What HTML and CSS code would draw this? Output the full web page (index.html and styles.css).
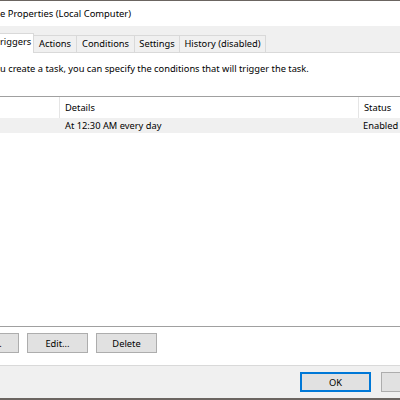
FILE: index.html
```html
<!DOCTYPE html>
<html>
<head>
<meta charset="utf-8">
<link rel="stylesheet" href="styles.css">
</head>
<body>
<div class="dialog">
  <div class="titlebar">e Properties (Local Computer)</div>
  <div class="body">
    <div class="tabs">
      <div class="tab selected">riggers</div>
      <div class="tab t-actions">Actions</div>
      <div class="tab t-conditions">Conditions</div>
      <div class="tab t-settings">Settings</div>
      <div class="tab t-history">History (disabled)</div>
    </div>
    <div class="panel">
      <p class="intro">u create a task, you can specify the conditions that will trigger the task.</p>
      <div class="list">
        <div class="row header">
          <div class="c1"></div>
          <div class="c2">Details</div>
          <div class="c3">Status</div>
        </div>
        <div class="row item">
          <div class="c1"></div>
          <div class="c2">At 12:30 AM every day</div>
          <div class="c3">Enabled</div>
        </div>
      </div>
      <div class="actions">
        <button class="btn new">New...</button>
        <button class="btn">Edit...</button>
        <button class="btn">Delete</button>
      </div>
    </div>
    <div class="footer">
      <button class="btn ok">OK</button>
      <button class="btn cancel">Cancel</button>
    </div>
  </div>
</div>
</body>
</html>
```

FILE: styles.css
```css
html, body {
  margin: 0;
  padding: 0;
  width: 400px;
  height: 400px;
  overflow: hidden;
  background: #f0f0f0;
}
.dialog {
  font-family: "Noto Sans", "Open Sans", sans-serif;
  font-size: 9.3px;
  color: #000;
  border-top: 1px solid #6b6561;
  border-bottom: 2px solid #6b6561;
  height: 397px;
  display: flex;
  flex-direction: column;
  width: 480px;
}
.titlebar {
  height: 25px;
  background: #fff;
  line-height: 26px;
  font-size: 9.4px;
  white-space: nowrap;
}
.body {
  flex: 1;
  display: flex;
  flex-direction: column;
  background: #f0f0f0;
}
.tabs {
  height: 26px;
  display: flex;
  align-items: flex-end;
}
.tab {
  height: 16px;
  line-height: 15px;
  border: 1px solid #d9d9d9;
  border-bottom: none;
  border-left: none;
  background: #f0f0f0;
  white-space: nowrap;
  text-align: center;
}
.t-actions { width: 42px; }
.t-conditions { width: 57px; }
.t-settings { width: 44px; }
.t-history { width: 85px; }
.tab.selected {
  width: 33px;
  height: 19px;
  text-align: left;
  background: #fff;
  line-height: 16px;
  margin-bottom: -1px;
  position: relative;
}
.panel {
  background: #fff;
  border-top: 1px solid #d9d9d9;
  border-bottom: 1px solid #d9d9d9;
  height: 312px;
  display: flex;
  flex-direction: column;
}
.intro {
  margin: 8px 0 0 0;
  height: 16px;
  line-height: 16px;
  white-space: nowrap;
}
.list {
  margin-top: 19px;
  border-top: 1px solid #a0a0a0;
  border-bottom: 1px solid #a0a0a0;
  height: 229px;
  margin-right: -20px;
}
.row {
  display: flex;
  white-space: nowrap;
}
.header {
  height: 21px;
  line-height: 21px;
}
.header .c1, .header .c2 {
  border-right: 1px solid #e5e5e5;
}
.item {
  height: 15px;
  line-height: 15px;
  background: #f0f0f0;
}
.c1 {
  width: 59px;
}
.c2 {
  width: 293px;
  padding-left: 5px;
}
.c3 {
  padding-left: 5px;
}
.item .c1 { width: 60px; }
.actions {
  display: flex;
  gap: 8px;
  margin-top: 6px;
  margin-left: -42px;
}
.btn {
  font-family: "Noto Sans", "Open Sans", sans-serif;
  font-size: 9.3px;
  color: #000;
  width: 61px;
  height: 20px;
  padding: 0;
  background: #e1e1e1;
  border: 1px solid #adadad;
  border-radius: 0;
  line-height: 17px;
}
.footer {
  flex: 1;
  display: flex;
  gap: 10px;
  padding: 6px 0 0 300px;
}
.ok {
  width: 71px;
  border: 2px solid #0078d7;
}
.cancel {
  width: 71px;
}
```
